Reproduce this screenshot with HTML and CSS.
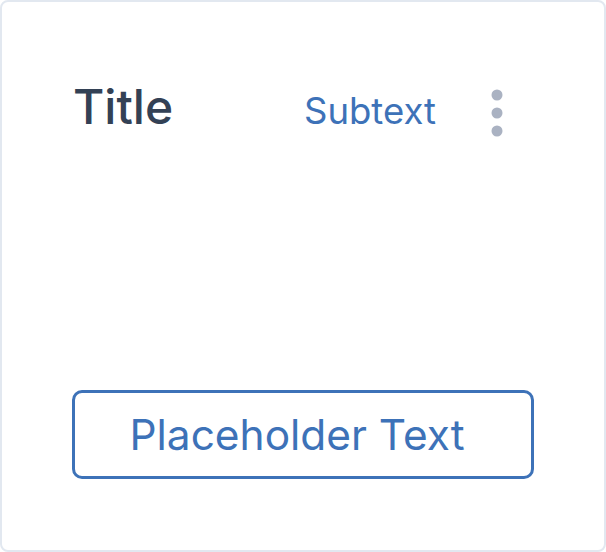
FILE: index.html
```html
<!DOCTYPE html>
<html>
<head>
	<meta charset="utf-8">
	<title>Card</title>
	<link rel="stylesheet" href="styles.css">
</head>
<body>
	<!-- card -->
	<div class="card">
		<div class="card-head">
			<h1 class="title">Title</h1>
			<span class="subtext">Subtext</span>
			<button class="more" type="button">
				<svg width="12" height="48" viewBox="0 0 12 48">
					<circle cx="6" cy="6" r="5.5"/>
					<circle cx="6" cy="24" r="5.5"/>
					<circle cx="6" cy="42" r="5.5"/>
				</svg>
			</button>
		</div>
		<button class="action" type="button">Placeholder Text</button>
	</div>
</body>
</html>
```

FILE: styles.css
```css
body{
	margin: 0;
	font-family: Inter, "Noto Sans", sans-serif;
	background: #ffffff;
}

.card{
	box-sizing: border-box;
	width: 606px;
	height: 552px;
	border: 2px solid #e2e8f0;
	border-radius: 8px;
	padding: 0 70px 71px 70px;
	display: flex;
	flex-direction: column;
}

/* top row */
.card-head{
	display: flex;
	align-items: center;
	margin-top: 75px;
	padding-right: 31px;
}

.title{
	margin: 0 0 0 1px;
	font-size: 48px;
	line-height: 52px;
	font-weight: 450;
	color: #334155;
	flex: 1;
}

.subtext{
	font-size: 36.5px;
	line-height: 52px;
	color: #3d72b8;
	margin-top: 8px;
}

.more{
	border: 0;
	background: none;
	padding: 0;
	margin-left: 55px;
	margin-top: 12px;
	display: flex;
}

.more svg{
	fill: #aab2c2;
}

/* bottom button */
.action{
	margin-top: auto;
	height: 89px;
	border: 3px solid #3d72b8;
	border-radius: 10px;
	padding: 0 12px 0 0;
	background: #ffffff;
	color: #3d72b8;
	font-family: Inter, "Noto Sans", sans-serif;
	font-size: 42.4px;
	cursor: pointer;
}
```
